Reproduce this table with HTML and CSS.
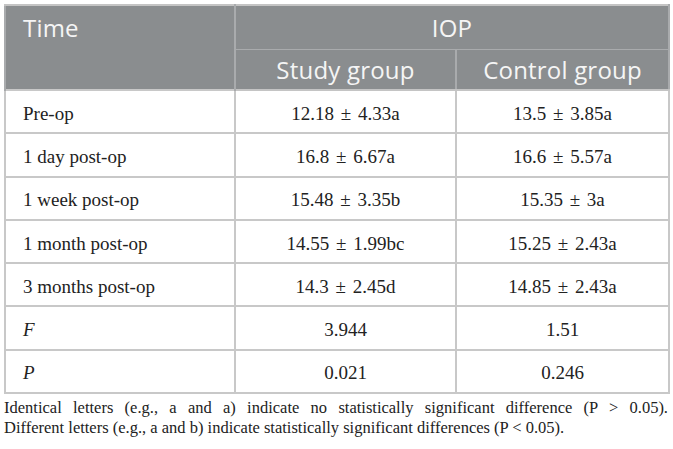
FILE: index.html
```html
<!DOCTYPE html>
<html>
<head>
<meta charset="utf-8">
<link rel="stylesheet" href="styles.css">
</head>
<body>
<div class="wrap">
  <table class="data">
    <colgroup>
      <col class="c1"><col class="c2"><col class="c3">
    </colgroup>
    <thead>
      <tr class="h1">
        <th class="left" rowspan="2">Time</th>
        <th colspan="2">IOP</th>
      </tr>
      <tr class="h2">
        <th>Study group</th>
        <th>Control group</th>
      </tr>
    </thead>
    <tbody>
      <tr><td class="left">Pre-op</td><td>12.18 ± 4.33a</td><td>13.5 ± 3.85a</td></tr>
      <tr><td class="left">1 day post-op</td><td>16.8 ± 6.67a</td><td>16.6 ± 5.57a</td></tr>
      <tr><td class="left">1 week post-op</td><td>15.48 ± 3.35b</td><td>15.35 ± 3a</td></tr>
      <tr><td class="left">1 month post-op</td><td>14.55 ± 1.99bc</td><td>15.25 ± 2.43a</td></tr>
      <tr><td class="left">3 months post-op</td><td>14.3 ± 2.45d</td><td>14.85 ± 2.43a</td></tr>
      <tr><td class="left"><i>F</i></td><td>3.944</td><td>1.51</td></tr>
      <tr><td class="left"><i>P</i></td><td>0.021</td><td>0.246</td></tr>
    </tbody>
  </table>
  <div class="note">
    <span class="line1">Identical letters (e.g., a and a) indicate no statistically significant difference (P &gt; 0.05).</span>
    <span class="line2">Different letters (e.g., a and b) indicate statistically significant differences (P &lt; 0.05).</span>
  </div>
</div>
</body>
</html>
```

FILE: styles.css
```css
html, body {
  margin: 0;
  padding: 0;
  background: #ffffff;
}

.wrap {
  padding: 4px 4px 0 4px;
  width: 664px;
}

.data {
  width: 664px;
  border-collapse: collapse;
  table-layout: fixed;
  font-family: "Liberation Serif", "Times New Roman", serif;
  font-size: 19px;
  color: #222222;
}

.c1 { width: 230px; }
.c2 { width: 221px; }
.c3 { width: 213px; }

.data th {
  background: #8a8d8f;
  color: #f5f5f5;
  font-family: "Open Sans", "DejaVu Sans", sans-serif;
  font-weight: 400;
  font-size: 24px;
  letter-spacing: 0.2px;
  text-align: center;
  padding: 0;
  border: 2px solid #a9abad;
  border-top-color: #c4c4c4;
}

.h1 th {
  height: 43px;
  border-bottom: 1px solid #a9abad;
}

.h2 th {
  height: 39px;
  border-bottom: 2px solid #c4c4c4;
  border-top: 1px solid #a9abad;
}

.data th.left {
  text-align: left;
  vertical-align: top;
  padding: 5px 0 0 17px;
}

.data td {
  height: 37.3px;
  padding: 4px 0 0 0;
  text-align: center;
  border: 2px solid #c8c8c8;
  line-height: 20px;
  word-spacing: 2px;
}

.data td.left {
  text-align: left;
  padding-left: 17px;
  word-spacing: 0;
}

.note {
  margin: 4px 0 0 0;
  font-family: "Liberation Serif", "Times New Roman", serif;
  font-size: 16.5px;
  line-height: 20px;
  color: #222222;
}

.line1 {
  display: block;
  text-align: justify;
  text-align-last: justify;
}

.line2 {
  display: block;
  text-align: left;
}
```
